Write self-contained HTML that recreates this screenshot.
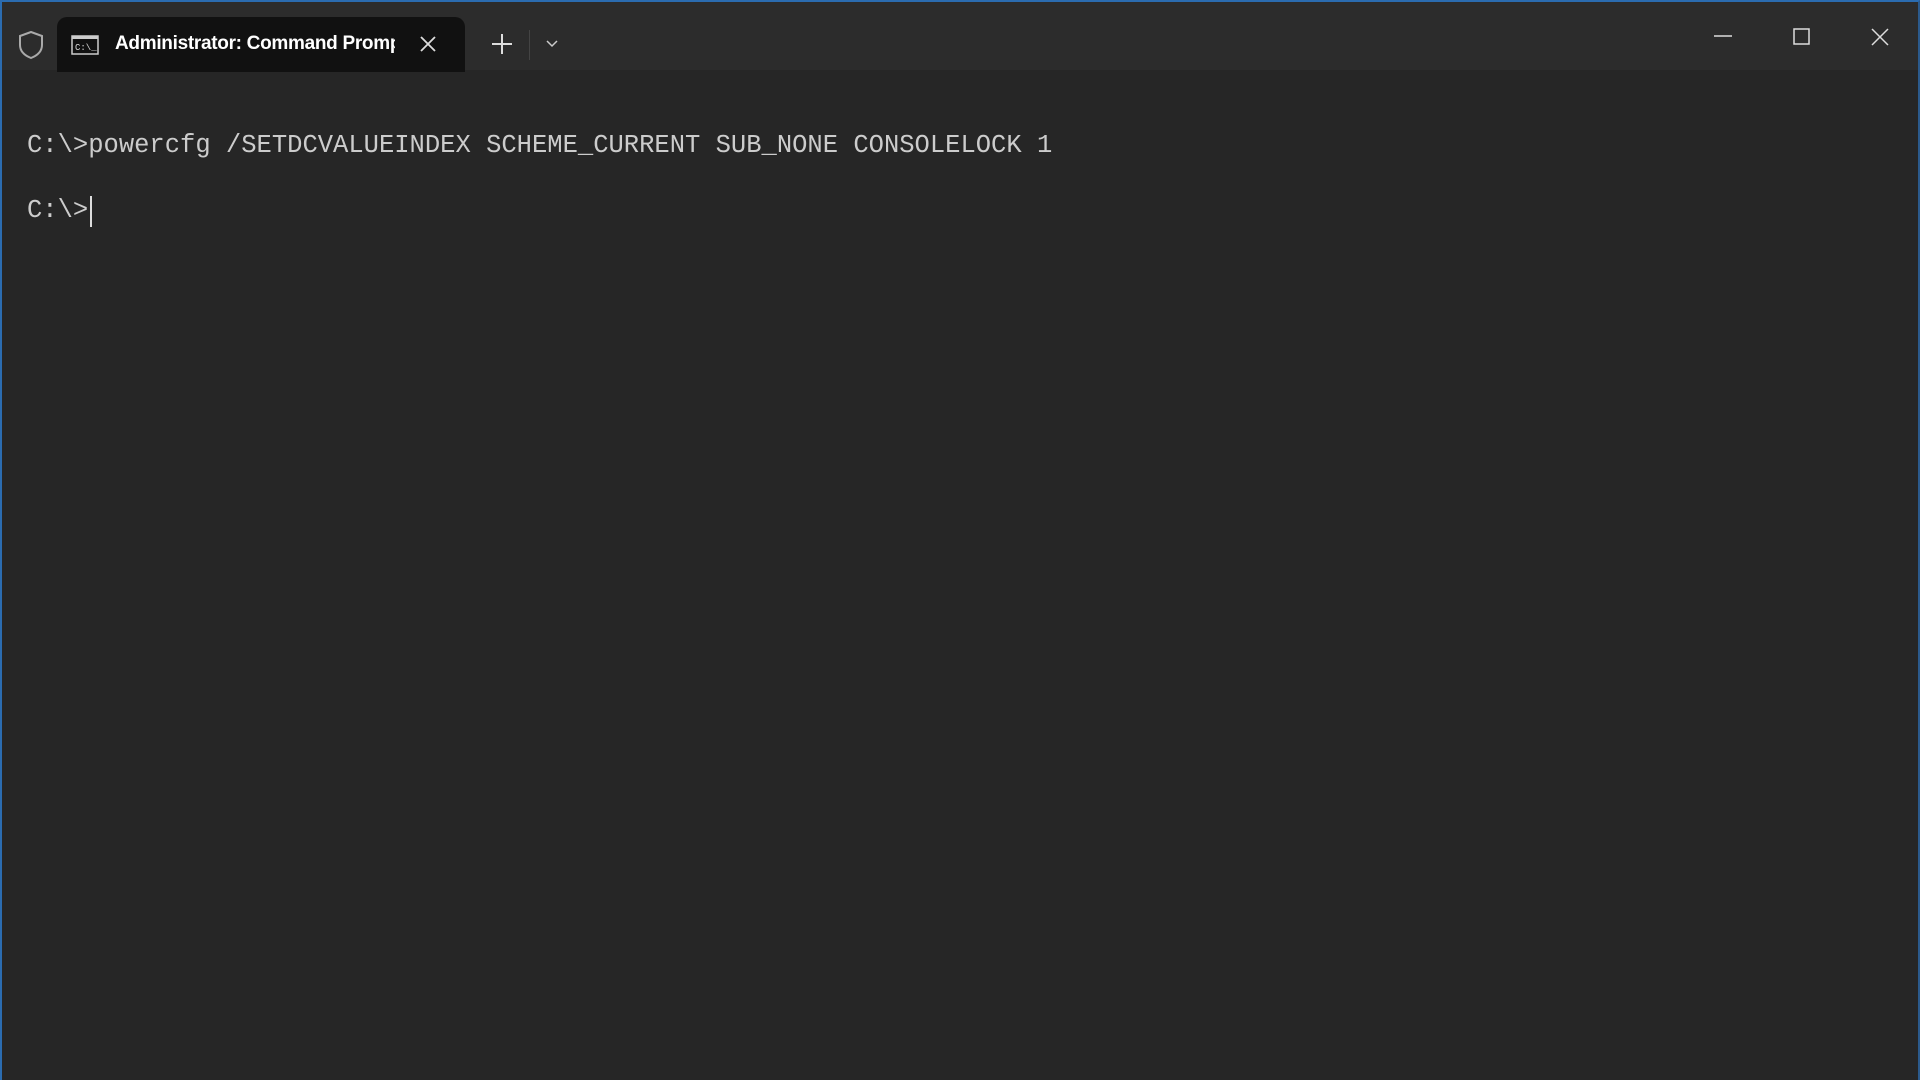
<!DOCTYPE html>
<html><head><meta charset="utf-8"><style>
html,body{margin:0;padding:0;width:1920px;height:1080px;overflow:hidden;background:#262626;}
.win{position:absolute;left:0;top:0;width:1920px;height:1080px;box-sizing:border-box;border-top:2px solid #2b6cb0;border-left:2px solid #2b6cb0;border-right:2px solid #2b5a8c;background:#262626;}
.title{position:absolute;left:0;top:0;right:0;height:68px;background:#2c2c2c;}
.tab{position:absolute;left:55px;top:15px;width:408px;height:55px;background:#111;border-radius:10px 10px 0 0;}
.tt{position:absolute;left:58px;top:16px;font:bold 19px "Liberation Sans",sans-serif;color:#fff;white-space:nowrap;width:280px;overflow:hidden;letter-spacing:-0.3px}
.term{position:absolute;left:25px;font:25.5px "Liberation Mono",monospace;color:#cccccc;white-space:pre;}
svg{position:absolute;}
</style></head><body><div class="win">
<div class="title">
<svg style="left:15px;top:28px" width="28" height="30" viewBox="0 0 28 30"><path d="M14 2 L25 6 V15 C25 22 19 26 14 28 C9 26 3 22 3 15 V6 Z" fill="none" stroke="#aaa" stroke-width="2"/></svg>
<div class="tab">
<svg style="left:14px;top:18px" width="28" height="20" viewBox="0 0 28 20"><rect x="1" y="1" width="26" height="18" fill="#111" stroke="#ccc" stroke-width="1.5"/><rect x="1" y="1" width="26" height="3" fill="#ccc"/><text x="4" y="15" font-family="Liberation Mono" font-size="9" fill="#ddd">C:\_</text></svg>
<div class="tt">Administrator: Command Prompt</div>
<svg style="left:362px;top:18px" width="18" height="18" viewBox="0 0 18 18"><path d="M2 2L16 16M16 2L2 16" stroke="#ddd" stroke-width="1.8"/></svg>
</div>
<svg style="left:489px;top:31px" width="22" height="22" viewBox="0 0 22 22"><path d="M11 1V21M1 11H21" stroke="#ddd" stroke-width="2"/></svg>
<div style="position:absolute;left:527px;top:28px;width:1px;height:30px;background:#444"></div>
<svg style="left:543px;top:37px" width="14" height="10" viewBox="0 0 14 10"><path d="M2 2L7 7L12 2" fill="none" stroke="#ccc" stroke-width="1.5"/></svg>
<svg style="left:1711px;top:32px" width="20" height="4"><path d="M1 2H19" stroke="#ddd" stroke-width="1.5"/></svg>
<svg style="left:1791px;top:26px" width="18" height="18"><rect x="1" y="1" width="15" height="15" fill="none" stroke="#ddd" stroke-width="1.5"/></svg>
<svg style="left:1868px;top:25px" width="20" height="20"><path d="M2 2L18 18M18 2L2 18" stroke="#ddd" stroke-width="1.5"/></svg>
</div>
<div class="term" style="top:129px">C:\&gt;powercfg /SETDCVALUEINDEX SCHEME_CURRENT SUB_NONE CONSOLELOCK 1</div>
<div class="term" style="top:194px">C:\&gt;</div>
<div style="position:absolute;left:88px;top:194px;width:2px;height:31px;background:#ddd"></div>
</div></body></html>
